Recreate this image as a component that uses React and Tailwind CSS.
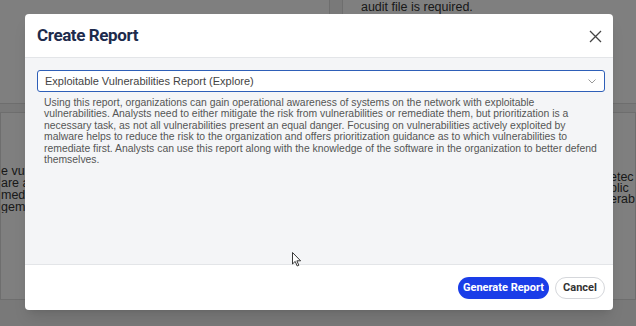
import React from "react";

const description =
  "Using this report, organizations can gain operational awareness of systems on the network with exploitable vulnerabilities. Analysts need to either mitigate the risk from vulnerabilities or remediate them, but prioritization is a necessary task, as not all vulnerabilities present an equal danger. Focusing on vulnerabilities actively exploited by malware helps to reduce the risk to the organization and offers prioritization guidance as to which vulnerabilities to remediate first. Analysts can use this report along with the knowledge of the software in the organization to better defend themselves.";

const Background = () => (
  <div className="absolute inset-0 flex gap-3 bg-[#f2f2f2] font-['Liberation_Sans',Arial,sans-serif] text-[12.5px] text-[#333]">
    <div className="flex w-[336px] flex-col gap-2">
      <div className="h-[104px] border-b border-r border-[#ddd] bg-white" />
      <div className="flex h-[188px] flex-col justify-end border border-[#ddd] bg-white pb-[86px] leading-[12px]">
        <div className="w-[24px] overflow-hidden whitespace-nowrap">e vuln</div>
        <div className="w-[24px] overflow-hidden whitespace-nowrap">are a</div>
        <div className="w-[24px] overflow-hidden whitespace-nowrap">media</div>
        <div className="w-[24px] overflow-hidden whitespace-nowrap">geme</div>
      </div>
    </div>
    <div className="flex flex-1 flex-col gap-2">
      <div className="h-[104px] border-b border-l border-[#ddd] bg-white pl-[18px] leading-[13px]">
        <div className="mt-[1px]">audit file is required.</div>
      </div>
      <div className="flex h-[188px] flex-col justify-end border border-[#ddd] bg-white pb-[94px] pl-[267px] leading-[11px]">
        <div className="overflow-hidden whitespace-nowrap">etec</div>
        <div className="overflow-hidden whitespace-nowrap">plic</div>
        <div className="overflow-hidden whitespace-nowrap">erab</div>
      </div>
    </div>
  </div>
);

export default function App() {
  return (
    <div className="relative h-[326px] w-[636px] overflow-hidden">
      <Background />
      <div className="absolute inset-0 bg-black/50" />

      <div className="absolute left-[25px] top-[14px] flex h-[296px] w-[588px] flex-col overflow-hidden rounded-[4px] bg-white shadow-lg">
        <div className="flex h-[44px] items-center justify-between border-b border-[#e3e5e8] pl-[12px] pr-[11px]">
          <h2 className="font-['Roboto',sans-serif] text-[17px] font-bold tracking-[-0.4px] text-[#1d2b4c]">
            Create Report
          </h2>
          <svg width="13" height="13" viewBox="0 0 13 13" className="mt-[1px]">
            <path d="M1 1 L12 12 M12 1 L1 12" stroke="#444" strokeWidth="1.3" fill="none" />
          </svg>
        </div>

        <div className="flex-1 bg-[#f4f5f7] pl-[12px] pr-[8px] pt-[12px]">
          <div className="flex h-[22px] items-center justify-between rounded-[3px] border-[1.5px] border-[#2e5fb8] bg-white pl-[7px] pr-[8px] font-['Liberation_Sans',Arial,sans-serif] text-[11px] text-[#444]">
            <span>Exploitable Vulnerabilities Report (Explore)</span>
            <svg width="8" height="5" viewBox="0 0 8 5">
              <path d="M0.5 0.5 L4 4 L7.5 0.5" stroke="#999" strokeWidth="1" fill="none" />
            </svg>
          </div>
          <p className="mt-[5px] w-[562px] pl-[7px] font-['Liberation_Sans',Arial,sans-serif] text-[10.4px] leading-[11.4px] text-[#555]">
            {description}
          </p>
        </div>

        <div className="flex h-[46px] items-center justify-end gap-[6px] border-t border-[#e3e5e8] pr-[8px] pt-[1px] font-['Roboto',sans-serif] text-[11px] font-bold">
          <button className="h-[22px] w-[91px] rounded-full bg-[#1a3de8] text-white">Generate Report</button>
          <button className="h-[22px] w-[50px] rounded-full border border-[#d5d7db] bg-white text-[#333]">Cancel</button>
        </div>
      </div>

      <svg className="absolute left-[292px] top-[252px]" width="10" height="15" viewBox="0 0 10 15">
        <path d="M0.5 0.5 L0.5 12 L3.2 9.4 L5.2 14 L6.8 13.3 L4.9 8.8 L8.6 8.8 Z" fill="#fff" stroke="#222" strokeWidth="0.9" />
      </svg>
    </div>
  );
}
